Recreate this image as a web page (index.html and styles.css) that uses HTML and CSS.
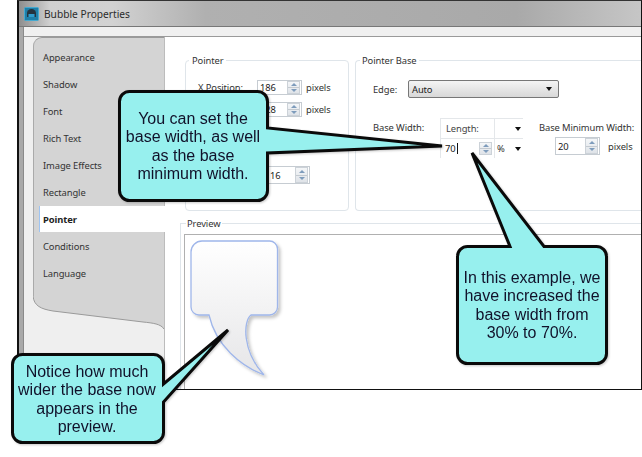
FILE: index.html
```html
<!DOCTYPE html>
<html lang="en">
<head>
<meta charset="utf-8">
<title>Bubble Properties</title>
<link rel="stylesheet" href="styles.css">
</head>
<body>
<div class="window">
  <header class="titlebar">
    <svg class="appicon" width="15" height="14" viewBox="0 0 15 14"><rect x="0.5" y="0.5" width="14" height="13" rx="1" fill="#1f7fa8" stroke="#45a9d0"/><path d="M3 10V6a4.500 4 0 0 1 9 0v4z" fill="#25343f"/><rect x="4.500" y="7" width="6" height="3" fill="#2f9ccd"/></svg>
    <span>Bubble Properties</span>
  </header>
  <div class="client">
    <div class="strip"></div>
    <div class="dialog">
      <nav class="side">
        <ul class="tabs">
          <li>Appearance</li>
          <li>Shadow</li>
          <li>Font</li>
          <li>Rich Text</li>
          <li>Image Effects</li>
          <li>Rectangle</li>
          <li class="active">Pointer</li>
          <li>Conditions</li>
          <li>Language</li>
        </ul>
        <svg class="wave" width="131" height="33" viewBox="0 0 131 33"><path d="M0 0H131V33C128 28 120 27 110 26L20 15C8 13 1 10 0 0Z" fill="#d4d4d4"/><path d="M0 0C1 10 8 13 20 15L110 26C120 27 128 28 131 33" fill="none" stroke="#9a9a9a"/></svg>
      </nav>
      <main class="pane">
        <div class="groups">
          <fieldset class="group pointer">
            <legend>Pointer</legend>
            <div class="row">
              <label class="lab">X Position:</label>
              <div class="num"><span>186</span><div class="spin"><i class="up"></i><i class="down"></i></div></div>
              <span>pixels</span>
            </div>
            <div class="row">
              <span class="lab"></span>
              <div class="num"><span>128</span><div class="spin"><i class="up"></i><i class="down"></i></div></div>
              <span>pixels</span>
            </div>
            <div class="row third">
              <span class="lab"></span>
              <div class="num wide"><span>16</span><div class="spin"><i class="up"></i><i class="down"></i></div></div>
            </div>
          </fieldset>
          <fieldset class="group base">
            <legend>Pointer Base</legend>
            <div class="edge">
              <label>Edge:</label>
              <div class="select"><span>Auto</span><b class="arrow"></b></div>
            </div>
            <div class="widths">
              <label class="bw">Base Width:</label>
              <div class="table">
                <div class="cell c-a">Length:</div>
                <div class="cell c-b"><b class="arrow"></b></div>
                <div class="cell c-a val"><span>70</span><u class="caret"></u><div class="spin"><i class="up"></i><i class="down"></i></div></div>
                <div class="cell c-b unit"><span>%</span><b class="arrow"></b></div>
              </div>
              <div class="minw">
                <label>Base Minimum Width:</label>
                <div class="minrow">
                  <div class="num short"><span>20</span><div class="spin"><i class="up"></i><i class="down"></i></div></div>
                  <span>pixels</span>
                </div>
              </div>
            </div>
          </fieldset>
        </div>
        <fieldset class="preview">
          <legend>Preview</legend>
          <div class="canvas">
            <svg class="bubble" width="100" height="145" viewBox="0 0 100 145">
              <defs>
                <linearGradient id="bf" x1="0" y1="0" x2="0" y2="1"><stop offset="0" stop-color="#ffffff"/><stop offset="1" stop-color="#e6e6e8"/></linearGradient>
                <filter id="bs" x="-10%" y="-10%" width="125%" height="125%"><feDropShadow dx="2.500" dy="2.500" stdDeviation="1.500" flood-color="#000" flood-opacity=".22"/></filter>
              </defs>
              <path d="M14 1H81A8 8 0 0 1 89.500 9V67A8 8 0 0 1 81 75H63C55 81 54 111 76 135C53 126 28 106 21 75H11A8 8 0 0 1 3 67V12A11 11 0 0 1 14 1Z" fill="url(#bf)" stroke="#9fb6ea" stroke-width="1.300" filter="url(#bs)"/>
            </svg>
          </div>
        </fieldset>
      </main>
    </div>
  </div>
</div>

<aside class="callout one">
  <svg width="332" height="116" viewBox="0 0 332 116"><path d="M13.500 2.500H141.500A10 10 0 0 1 151.500 12.500V39L326 57L151.500 64V101.500A10 10 0 0 1 141.500 111.500H13.500A10 10 0 0 1 3.500 101.500V12.500A10 10 0 0 1 13.500 2.500Z" fill="#97f0ee" stroke="#0a0a0a" stroke-width="3"/></svg>
  <p>You can set the<br>base width, as well<br>as the base<br>minimum width.</p>
</aside>
<aside class="callout two">
  <svg width="158" height="218" viewBox="0 0 158 218"><path d="M13.500 96.500H56L18 3L90 96.500H142.500A10 10 0 0 1 152.500 106.500V203.500A10 10 0 0 1 142.500 213.500H13.500A10 10 0 0 1 3.500 203.500V106.500A10 10 0 0 1 13.500 96.500Z" fill="#97f0ee" stroke="#0a0a0a" stroke-width="3"/></svg>
  <p>In this example, we<br>have increased the<br>base width from<br>30% to 70%.</p>
</aside>
<aside class="callout three">
  <svg width="222" height="118" viewBox="0 0 222 118"><path d="M13.500 27.500H144.500A10 10 0 0 1 154.500 37.500V57L219 3L154.500 75V105.500A10 10 0 0 1 144.500 115.500H13.500A10 10 0 0 1 3.500 105.500V37.500A10 10 0 0 1 13.500 27.500Z" fill="#97f0ee" stroke="#0a0a0a" stroke-width="3"/></svg>
  <p>Notice how much<br>wider the base now<br>appears in the<br>preview.</p>
</aside>
</body>
</html>
```
FILE: styles.css
```css
* { box-sizing: border-box; }
html, body { margin: 0; padding: 0; }
body {
  width: 642px;
  height: 457px;
  overflow: hidden;
  background: #fff;
  position: relative;
  font-family: "Noto Sans", "Liberation Sans", sans-serif;
  font-size: 9.400px;
  letter-spacing: -0.1px;
  color: #333;
}
.window {
  margin-left: 17px;
  width: 625px;
  height: 390px;
  display: flex;
  flex-direction: column;
  background: #a9a9a9;
  border: 1px solid #111;
  border-left-width: 2px;
  border-top-color: #333;
  padding-left: 4px;
}
.titlebar {
  height: 26px;
  margin-left: -4px;
  flex: none;
  display: flex;
  align-items: center;
  gap: 5px;
  padding: 0 0 0 5px;
  font-size: 10.200px;
  letter-spacing: 0;
  color: #2b2b2b;
  background: linear-gradient(90deg, #8e8e8e 0, #d0d0d0 5%, #d2d2d2 15%, #b0b0b0 30%, #a9a9a9 80%, #c6c6c6 100%);
  border-bottom: 1px solid #777;
}
.client {
  flex: 1;
  min-height: 0;
  display: flex;
  flex-direction: column;
  border-left: 1px solid #8a8a8a;
  background: #fff;
}
.strip {
  height: 10px;
  flex: none;
  background: #f0f0f0;
  border-bottom: 1px solid #9a9a9a;
}
.dialog { flex: 1; min-height: 0; display: flex; }
.side {
  width: 141px;
  flex: none;
  padding-left: 9px;
  background: #efefef;
  border-right: 1px solid #bcbcbc;
}
.tabs {
  list-style: none;
  margin: 0;
  padding: 6px 0 0;
  height: 259px;
  background: #d4d4d4;
  border-radius: 9px 0 0 0;
  border-top: 1px solid #9a9a9a;
  border-left: 1px solid #aaa;
}
.tabs li {
  height: 27px;
  line-height: 27px;
  padding-left: 9px;
  white-space: nowrap;
}
.tabs .active {
  margin-left: 5px;
  margin-right: -2px;
  padding-left: 3px;
  height: 26px;
  margin-bottom: 1px;
  background: #fff;
  font-weight: 700;
  color: #222;
  border-left: 1px solid #9ec4f2;
  position: relative;
}
.wave { display: block; }
.pane {
  flex: 1;
  min-width: 0;
  overflow: hidden;
  background: #fff;
  padding: 17px 0 0 15px;
  display: flex;
  flex-direction: column;
}
.groups {
  display: flex;
  gap: 6px;
  padding-left: 5px;
  height: 157px;
  flex: none;
}
fieldset { margin: 0; min-width: 0; }
legend { padding: 0 3px; line-height: 13px; }
.group {
  border: 1px solid #dfe5ea;
  border-radius: 4px;
  height: 157px;
  padding: 0;
}
.pointer { width: 164px; flex: none; padding: 13px 0 0 12px; }
.pointer legend { margin-left: -9px; }
.base { flex: 1; border-right: 0; border-radius: 4px 0 0 4px; padding: 11px 0 0 17px; }
.base legend { margin-left: -13px; padding-left: 2px; }
.row { display: flex; align-items: center; height: 15px; margin-bottom: 7px; }
.row.third { margin-top: 49px; height: 18px; }
.lab { width: 59px; flex: none; }
.num {
  display: flex;
  align-items: center;
  justify-content: space-between;
  width: 45px;
  height: 15px;
  border: 1px solid #c6ccd2;
  background: #fff;
  padding-left: 2px;
  margin-right: 4px;
  color: #222;
}
.num.wide { width: 61px; height: 18px; margin-left: -8px; padding-left: 20px; }
.num.wide .spin { height: 16px; }
.num.short { width: 45px; height: 18px; margin: 0 8px 0 0; }
.num.short .spin { height: 16px; }
.spin {
  width: 13px;
  height: 13px;
  flex: none;
  display: flex;
  flex-direction: column;
  margin-right: 1px;
  background: linear-gradient(#f4f6f8, #dfe3e8);
  border: 1px solid #ccd2d8;
}
.spin i { flex: 1; display: flex; align-items: center; justify-content: center; }
.spin i + i { border-top: 1px solid #c4cad0; }
.spin i::after { content: ""; border: 3px solid transparent; }
.spin .up::after { border-top: 0; border-bottom-color: #7e9cbc; }
.spin .down::after { border-bottom: 0; border-top-color: #7e9cbc; }
.edge { display: flex; align-items: center; height: 18px; margin-top: 2px; }
.edge label { width: 35px; flex: none; }
.select {
  width: 151px;
  height: 18px;
  display: flex;
  align-items: center;
  justify-content: space-between;
  padding: 0 6px 0 3px;
  border: 1px solid #777;
  border-radius: 2px;
  background: linear-gradient(#f4f4f4, #d8d8d8);
  color: #222;
}
.arrow { border: 3.500px solid transparent; border-bottom: 0; border-top: 4px solid #111; width: 0; height: 0; }
.widths { display: flex; margin-top: 20px; }
.bw { width: 67px; flex: none; line-height: 19px; }
.table {
  width: 83px;
  flex: none;
  display: grid;
  grid-template-columns: 53px 28px;
  grid-auto-rows: 19px;
  background: #e4e7ea;
  gap: 1px;
  border: 1px solid #e4e7ea;
  height: 40px;
}
.cell { background: #fff; display: flex; align-items: center; }
.c-a { padding-left: 5px; color: #444; }
.c-b { justify-content: flex-end; padding-right: 2px; }
.val { padding-left: 4px; color: #222; }
.caret { width: 1px; height: 11px; background: #111; margin-left: 1px; text-decoration: none; }
.val .spin { margin-left: auto; margin-right: 2px; }
.unit { justify-content: space-between; padding: 0 2px 0 2px; }
.minw { margin-left: 16px; white-space: nowrap; }
.minw label { display: block; line-height: 19px; }
.minrow { display: flex; align-items: center; margin: 0 0 0 16px; }
.preview {
  border: 1px solid #dfe5ea;
  border-right: 0;
  border-bottom: 0;
  margin-top: 6px;
  padding: 4px 0 0 3px;
  flex: 1;
  min-height: 0;
}
.preview legend { margin-left: 2px; padding: 0 2px 0 1px; }
.canvas {
  height: 155px;
  background: #fff;
  border: 1px solid #b0b0b0;
  border-right: 0;
  border-bottom: 0;
  padding: 5px 0 0 3px;
}
.bubble { display: block; }
.callout { position: absolute; filter: drop-shadow(1px 1px 1px rgba(0, 0, 0, .22)); }
.callout svg { display: block; }
.callout p {
  position: absolute;
  margin: 0;
  text-align: center;
  font-family: "Liberation Sans", Arial, sans-serif;
  font-size: 16px;
  letter-spacing: 0;
  line-height: 18.300px;
  color: #11112a;
  white-space: nowrap;
  width: 150px;
}
.one { left: 116px; top: 89px; }
.one p { left: 2px; top: 21px; }
.two { left: 454px; top: 150px; }
.two p { left: 3px; top: 119px; }
.three { left: 9px; top: 327px; }
.three p { left: 3px; top: 36px; }
.appicon { flex: none; }
```
